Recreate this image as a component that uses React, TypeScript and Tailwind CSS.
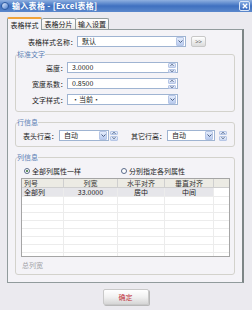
import React from "react";

const Chevron = () => (
  <svg width="5" height="3" viewBox="0 0 5 3">
    <polyline points="0.5,0.5 2.5,2.5 4.5,0.5" fill="none" stroke="#4d6185" strokeWidth="1" />
  </svg>
);

const Up = () => (
  <svg width="4" height="2" viewBox="0 0 4 2">
    <polyline points="0.3,1.8 2,0.3 3.7,1.8" fill="none" stroke="#4d6185" strokeWidth="0.9" />
  </svg>
);
const Down = () => (
  <svg width="4" height="2" viewBox="0 0 4 2">
    <polyline points="0.3,0.2 2,1.7 3.7,0.2" fill="none" stroke="#4d6185" strokeWidth="0.9" />
  </svg>
);

const DropBtn = () => (
  <div className="w-[8px] h-[9px] my-auto mr-[1px] flex items-center justify-center rounded-[1px] border border-[#b6c6e6] bg-gradient-to-b from-[#e4ecfb] to-[#b9cbef]">
    <Chevron />
  </div>
);

const Spin = ({ inside = false }: { inside?: boolean }) => (
  <div
    className={
      "w-[8px] h-[10px] flex flex-col gap-[1px] " + (inside ? "my-auto mr-[1px]" : "")
    }
  >
    <div className="flex-1 flex items-center justify-center rounded-[1px] border border-[#b6c6e6] bg-gradient-to-b from-[#eef2fb] to-[#c9d6f1]">
      <Up />
    </div>
    <div className="flex-1 flex items-center justify-center rounded-[1px] border border-[#b6c6e6] bg-gradient-to-b from-[#eef2fb] to-[#c9d6f1]">
      <Down />
    </div>
  </div>
);

const Combo = ({ w, text }: { w: string; text: string }) => (
  <div className={w + " h-[11px] flex border border-[#9fb4d2] bg-white"}>
    <span className="flex-1 pl-[4px] leading-[9px] text-[7px] text-[#222]">{text}</span>
    <DropBtn />
  </div>
);

const NumInput = ({ text }: { text: string }) => (
  <div className="w-[111px] h-[11px] flex border border-[#9fb4d2] bg-white">
    <span className="flex-1 pl-[4px] leading-[9px] text-[7px] text-[#222]">{text}</span>
    <Spin inside />
  </div>
);

const Group = ({
  title,
  className,
  children,
}: {
  title: string;
  className?: string;
  children: React.ReactNode;
}) => (
  <fieldset className={"border border-[#d3d2cc] rounded-[3px] " + (className ?? "")}>
    <legend className="ml-[1px] px-0 text-[7px] leading-[8px] text-[#5b7fb5]">{title}</legend>
    {children}
  </fieldset>
);

const Radio = ({ checked }: { checked?: boolean }) => (
  <div className="w-[6px] h-[6px] rounded-full border border-[#5a6a8a] bg-white flex items-center justify-center">
    {checked && <div className="w-[2px] h-[2px] rounded-full bg-[#2f6b2a]" />}
  </div>
);

export default function App() {
  const rows = Array.from({ length: 8 });
  return (
    <div className="w-[252px] h-[310px] overflow-hidden bg-[#ebeaef] font-['Noto_Sans_CJK_SC',sans-serif] text-[7px] leading-[8px] text-[#222] flex flex-col">
      {/* title bar */}
      <div className="h-[12px] flex items-center bg-gradient-to-b from-[#8fb0e0] via-[#3f70c0] to-[#5b88cc]">
        <div className="ml-[1px] w-[8px] h-[8px] rounded-full bg-gradient-to-br from-[#e8f0ff] to-[#4a7bc8] border border-[#2d5aa0]" />
        <span className="ml-[3px] text-white font-bold text-[8px] leading-[10px] tracking-[0.3px]">
          输入表格 - [Excel表格]
        </span>
        <div className="ml-auto mr-[2px] w-[11px] h-[10px] rounded-[2px] border border-[#dbe6f7] bg-gradient-to-b from-[#7fa6e0] to-[#3c6cc0] flex items-center justify-center">
          <svg width="6" height="6" viewBox="0 0 6 6">
            <path d="M0.8 0.8 L5.2 5.2 M5.2 0.8 L0.8 5.2" stroke="white" strokeWidth="1.3" />
          </svg>
        </div>
      </div>

      {/* tabs */}
      <div className="mt-[5px] ml-[7px] h-[12px] flex items-end">
        <div className="relative z-10 -mb-[1px] h-[13px] w-[35px] flex items-center justify-center border-x border-[#919b9c] border-t-2 border-t-[#f0a33a] bg-[#f4f3f7] rounded-t-[2px]">
          表格样式
        </div>
        <div className="h-[11px] w-[34px] flex items-center justify-center border-t border-r border-[#919b9c] bg-gradient-to-b from-white to-[#ecebe6] rounded-t-[2px]">
          表格分片
        </div>
        <div className="h-[11px] w-[33px] flex items-center justify-center border-t border-r border-[#919b9c] bg-gradient-to-b from-white to-[#ecebe6] rounded-t-[2px]">
          输入设置
        </div>
      </div>

      {/* panel */}
      <div className="ml-[7px] w-[237px] h-[254px] border border-[#919b9c] border-r-2 border-r-[#7d8586] bg-[#f4f3f7] pt-[6px] pl-[7px] pr-[7px] flex flex-col">
        <div className="h-[11px] flex items-center pl-[13px]">
          <span className="w-[49px]">表格样式名称：</span>
          <Combo w="w-[109px]" text="默认" />
          <div className="ml-[5px] w-[15px] h-[11px] rounded-[2px] border border-[#c8c8c8] bg-gradient-to-b from-white to-[#dcdcdc] flex items-center justify-center text-[6px] text-[#555]">
            &gt;&gt;
          </div>
        </div>

        <Group title="标准文字" className="mt-[3px] w-[220px] pb-[6px]">
          <div className="flex flex-col gap-[5px] mt-[4px]">
            <div className="flex items-center">
              <span className="w-[51px] text-right">高度：</span>
              <NumInput text="3.0000" />
            </div>
            <div className="flex items-center">
              <span className="w-[51px] text-right">宽度系数：</span>
              <NumInput text="0.8500" />
            </div>
            <div className="flex items-center">
              <span className="w-[51px] text-right">文字样式：</span>
              <Combo w="w-[111px]" text="•当前•" />
            </div>
          </div>
        </Group>

        <Group title="行信息" className="mt-[6px] w-[220px] pb-[5px]">
          <div className="mt-[4px] flex items-center pl-[7px]">
            <span className="w-[36px]">表头行高：</span>
            <Combo w="w-[50px]" text="自动" />
            <div className="ml-[1px]">
              <Spin />
            </div>
            <span className="ml-[13px] w-[36px]">其它行高：</span>
            <Combo w="w-[48px]" text="自动" />
            <div className="ml-[4px]">
              <Spin />
            </div>
          </div>
        </Group>

        <Group title="列信息" className="mt-[6px] w-[220px] pb-[5px]">
          <div className="mt-[6px] h-[8px] flex items-center">
            <div className="ml-[8px] flex items-center gap-[2px]">
              <Radio checked />
              <span>全部列属性一样</span>
            </div>
            <div className="ml-[40px] flex items-center gap-[2px]">
              <Radio />
              <span>分别指定各列属性</span>
            </div>
          </div>
          <div className="mt-[3px] ml-[5px] w-[209px] h-[79px] overflow-hidden border border-[#a5a5a5] bg-white">
            <div className="grid grid-cols-[42px_54px_47px_49px_1fr] h-[9px] bg-[#ecebe4] border-b border-[#cfcfcf] text-[#333] overflow-hidden">
              <div className="pl-[2px] border-r border-[#cfcfcf] leading-[8px] overflow-hidden">列号</div>
              <div className="text-center border-r border-[#cfcfcf] leading-[8px] overflow-hidden">列宽</div>
              <div className="text-center border-r border-[#cfcfcf] leading-[8px] overflow-hidden">水平对齐</div>
              <div className="text-center border-r border-[#cfcfcf] leading-[8px] overflow-hidden">垂直对齐</div>
              <div />
            </div>
            <div className="grid grid-cols-[42px_54px_47px_49px_1fr] h-[9px] border-b border-[#ececec] overflow-hidden">
              <div className="pl-[2px] bg-[#e6e6ea] border-r border-[#ececec] leading-[8px] overflow-hidden">全部列</div>
              <div className="text-center bg-[#e6e6ea] border-r border-[#ececec] leading-[8px] overflow-hidden">33.0000</div>
              <div className="text-center bg-[#e6e6ea] border-r border-[#ececec] leading-[8px] overflow-hidden">居中</div>
              <div className="text-center bg-[#e6e6ea] border-r border-[#ececec] leading-[8px] overflow-hidden">中间</div>
              <div />
            </div>
            {rows.map((_, i) => (
              <div
                key={i}
                className="grid grid-cols-[42px_54px_47px_49px_1fr] h-[8px] border-b border-[#ececec]"
              >
                <div className="border-r border-[#ececec]" />
                <div className="border-r border-[#ececec]" />
                <div className="border-r border-[#ececec]" />
                <div className="border-r border-[#ececec]" />
                <div />
              </div>
            ))}
          </div>
          <div className="mt-[4px] ml-[6px] h-[8px] text-[#a3a3a8]">总列宽</div>
        </Group>
      </div>

      {/* OK button */}
      <div className="mt-[6px] flex justify-center">
        <div className="ml-[-1px] w-[46px] h-[16px] rounded-[2px] border border-[#c9c9c9] bg-gradient-to-b from-white via-[#f1f1f1] to-[#d6d6d6] shadow-[1px_1px_0_#b8b8b8] flex items-center justify-center text-[#c0303a] text-[7px]">
          确定
        </div>
      </div>
    </div>
  );
}
